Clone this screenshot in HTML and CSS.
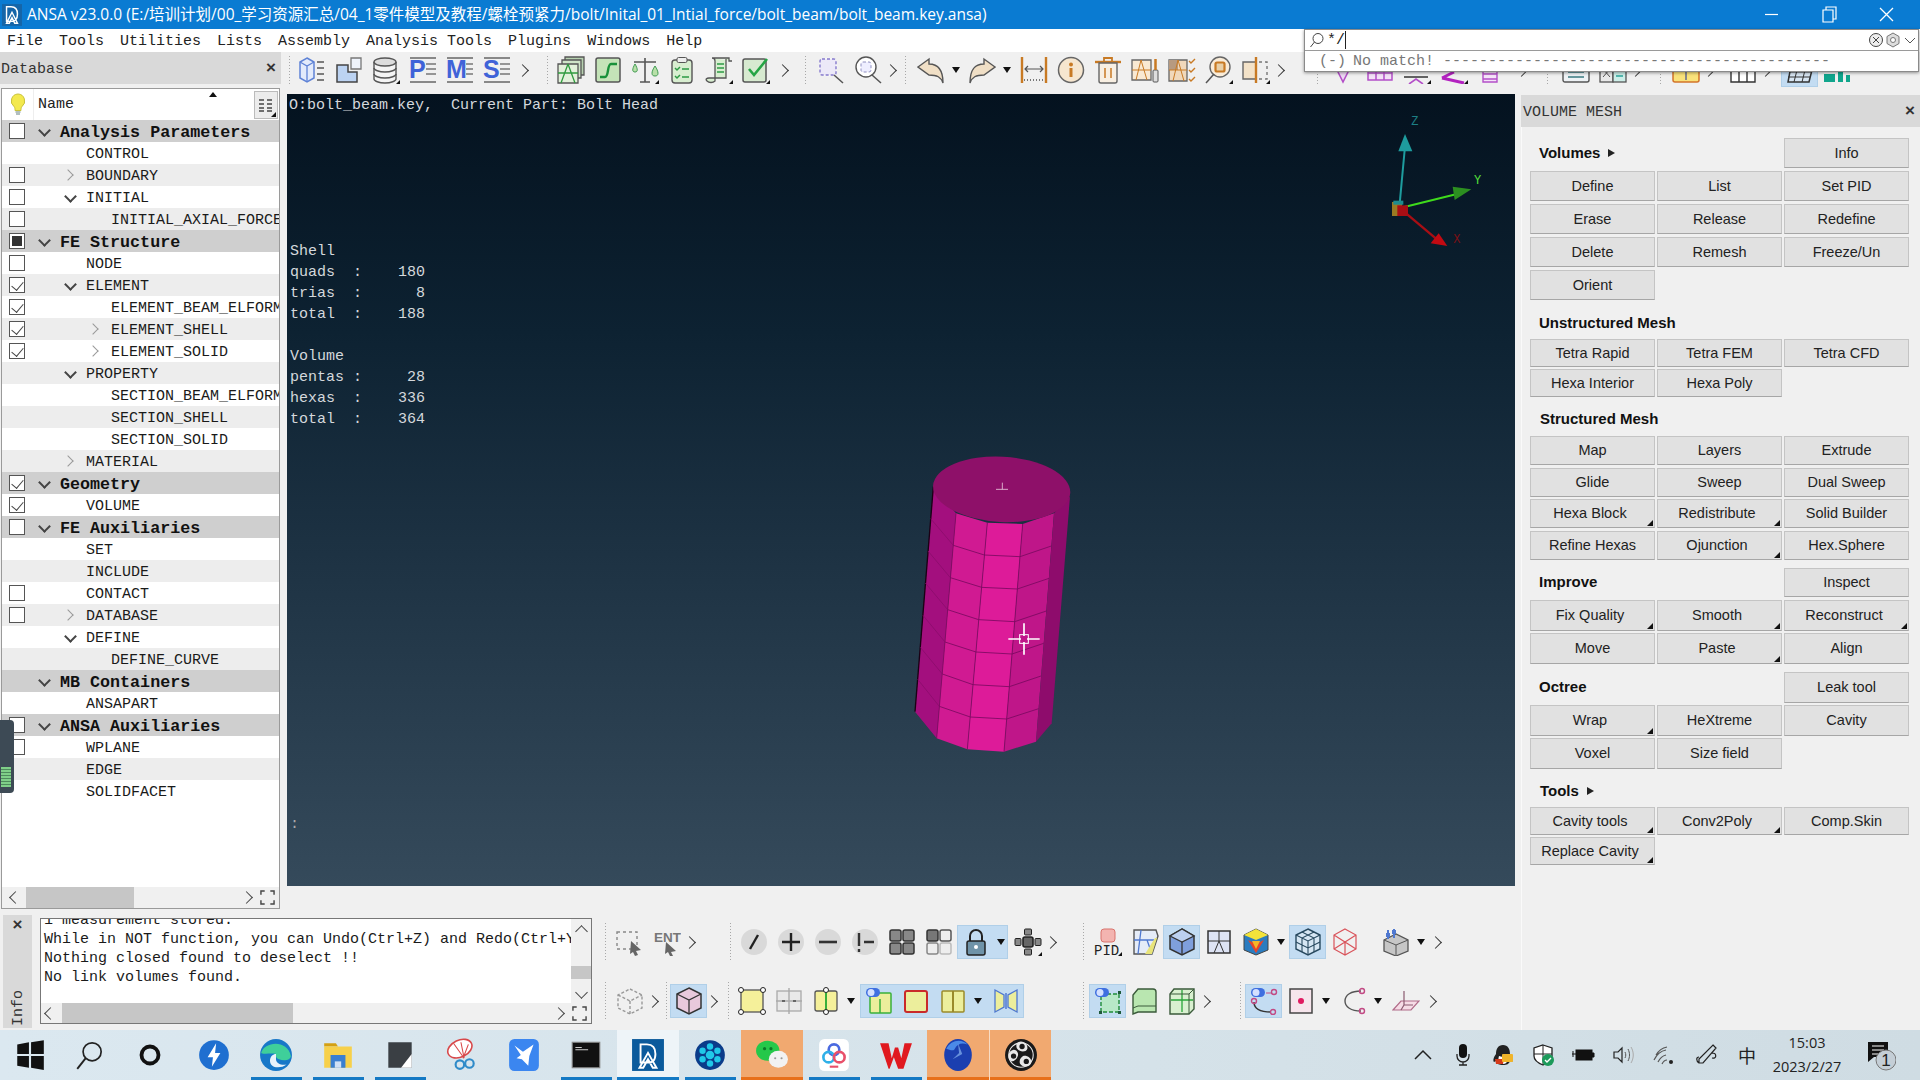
FILE: index.html
```html
<!DOCTYPE html>
<html lang="en">
<head>
<meta charset="utf-8">
<title>ANSA</title>
<link rel="stylesheet" href="styles.css">
</head>
<body>
<header class="titlebar">
  <svg class="applogo" viewBox="0 0 22 24"><rect width="22" height="24" fill="#1565a8"/><path d="M5 3h5q7 0 7 8t-7 8H5zM11 9l-6 12h3l3-6 3 6h3z" fill="none" stroke="#fff" stroke-width="1.6"/></svg>
  <span class="titletext">ANSA v23.0.0 (E:/培训计划/00_学习资源汇总/04_1零件模型及教程/螺栓预紧力/bolt/Inital_01_Intial_force/bolt_beam/bolt_beam.key.ansa)</span>
  <div class="winctl">
    <svg viewBox="0 0 58 29"><path d="M23 14.500h13" stroke="#fff" stroke-width="1.200" fill="none"/></svg>
    <svg viewBox="0 0 58 29"><path d="M23 10h10v12H23zM26 10V7h10v12h-3" stroke="#fff" stroke-width="1.200" fill="none"/></svg>
    <svg viewBox="0 0 58 29"><path d="M22 8l13 13M35 8L22 21" stroke="#fff" stroke-width="1.300" fill="none"/></svg>
  </div>
</header>
<nav class="menubar"><span>File</span><span>Tools</span><span>Utilities</span><span>Lists</span><span>Assembly</span><span>Analysis Tools</span><span>Plugins</span><span>Windows</span><span>Help</span></nav>

<main class="work">
  <section class="dbpanel">
    <div class="dbhead"><span class="dbt">Database</span><span class="x">×</span></div>
    <div class="tree">
      <div class="treehead">
        <svg class="lamp" viewBox="0 0 16 24"><path d="M8 1a7 7 0 0 0-4 12.500c1 1 1 3 1 4h6c0-1 0-3 1-4A7 7 0 0 0 8 1z" fill="#f3e94e" stroke="#c9c23a"/><path d="M5.500 19h5M6 21h4" stroke="#9aa" stroke-width="1.500"/></svg>
        <span class="namecol">Name</span>
        <span class="sortup"></span>
        <span class="colbtn"><svg viewBox="0 0 20 18"><path d="M3 4h5M3 8h5M3 12h5M11 4h5M11 8h5M11 12h5M3 15h5M11 15h5" stroke="#444" stroke-width="1.400" fill="none"/></svg></span>
      </div>
      <div class="rows">
        <div class="row hd"><span class="cbs"><i class="cb"></i></span><i class="chv down"></i><span class="lbl">Analysis Parameters</span></div>
        <div class="row"><span class="cbs"></span><i class="chv l1"></i><span class="lbl">CONTROL</span></div>
        <div class="row alt"><span class="cbs"><i class="cb"></i></span><i class="chv right l1"></i><span class="lbl">BOUNDARY</span></div>
        <div class="row"><span class="cbs"><i class="cb"></i></span><i class="chv down l1"></i><span class="lbl">INITIAL</span></div>
        <div class="row alt"><span class="cbs"><i class="cb"></i></span><i class="chv l2"></i><span class="lbl">INITIAL_AXIAL_FORCE</span></div>
        <div class="row hd"><span class="cbs"><i class="cb fill"></i></span><i class="chv down"></i><span class="lbl">FE Structure</span></div>
        <div class="row"><span class="cbs"><i class="cb"></i></span><i class="chv l1"></i><span class="lbl">NODE</span></div>
        <div class="row alt"><span class="cbs"><i class="cb on"></i></span><i class="chv down l1"></i><span class="lbl">ELEMENT</span></div>
        <div class="row"><span class="cbs"><i class="cb on"></i></span><i class="chv l2"></i><span class="lbl">ELEMENT_BEAM_ELFORM</span></div>
        <div class="row alt"><span class="cbs"><i class="cb on"></i></span><i class="chv right l2"></i><span class="lbl">ELEMENT_SHELL</span></div>
        <div class="row"><span class="cbs"><i class="cb on"></i></span><i class="chv right l2"></i><span class="lbl">ELEMENT_SOLID</span></div>
        <div class="row alt"><span class="cbs"></span><i class="chv down l1"></i><span class="lbl">PROPERTY</span></div>
        <div class="row"><span class="cbs"></span><i class="chv l2"></i><span class="lbl">SECTION_BEAM_ELFORM</span></div>
        <div class="row alt"><span class="cbs"></span><i class="chv l2"></i><span class="lbl">SECTION_SHELL</span></div>
        <div class="row"><span class="cbs"></span><i class="chv l2"></i><span class="lbl">SECTION_SOLID</span></div>
        <div class="row alt"><span class="cbs"></span><i class="chv right l1"></i><span class="lbl">MATERIAL</span></div>
        <div class="row hd"><span class="cbs"><i class="cb on"></i></span><i class="chv down"></i><span class="lbl">Geometry</span></div>
        <div class="row"><span class="cbs"><i class="cb on"></i></span><i class="chv l1"></i><span class="lbl">VOLUME</span></div>
        <div class="row hd"><span class="cbs"><i class="cb"></i></span><i class="chv down"></i><span class="lbl">FE Auxiliaries</span></div>
        <div class="row"><span class="cbs"></span><i class="chv l1"></i><span class="lbl">SET</span></div>
        <div class="row alt"><span class="cbs"></span><i class="chv l1"></i><span class="lbl">INCLUDE</span></div>
        <div class="row"><span class="cbs"><i class="cb"></i></span><i class="chv l1"></i><span class="lbl">CONTACT</span></div>
        <div class="row alt"><span class="cbs"><i class="cb"></i></span><i class="chv right l1"></i><span class="lbl">DATABASE</span></div>
        <div class="row"><span class="cbs"></span><i class="chv down l1"></i><span class="lbl">DEFINE</span></div>
        <div class="row alt"><span class="cbs"></span><i class="chv l2"></i><span class="lbl">DEFINE_CURVE</span></div>
        <div class="row hd"><span class="cbs"></span><i class="chv down"></i><span class="lbl">MB Containers</span></div>
        <div class="row"><span class="cbs"></span><i class="chv l1"></i><span class="lbl">ANSAPART</span></div>
        <div class="row hd"><span class="cbs"><i class="cb"></i></span><i class="chv down"></i><span class="lbl">ANSA Auxiliaries</span></div>
        <div class="row"><span class="cbs"><i class="cb"></i></span><i class="chv l1"></i><span class="lbl">WPLANE</span></div>
        <div class="row alt"><span class="cbs"></span><i class="chv l1"></i><span class="lbl">EDGE</span></div>
        <div class="row"><span class="cbs"></span><i class="chv l1"></i><span class="lbl">SOLIDFACET</span></div>
      </div>
      <div class="hbar">
        <i class="arr left"></i><span class="track"><b class="thumb t1"></b></span><i class="arr rightarr"></i>
        <svg class="corners" viewBox="0 0 16 16"><path d="M1 5V1h4M11 1h4v4M1 11v4h4M15 11v4h-4" fill="none" stroke="#444" stroke-width="1.500"/></svg>
      </div>
    </div>
  </section>

  <section class="toolbar top">
    <i class="sep s1"></i><i class="sp w2"></i>
    <span class="i"><svg class="ic" viewBox="0 0 28 28"><path d="M9 2l7 4v16l-7 4-7-4V6z" fill="#e3ebfb" stroke="#5f83d6" stroke-width="1.500"/><path d="M2 6l7 4 7-4M9 10v16" fill="none" stroke="#5f83d6" stroke-width="1.300"/><path d="M19 6h7M19 12h7M19 18h7M19 24h7" stroke="#555" stroke-width="1.500"/></svg></span>
    <span class="i"><svg class="ic" viewBox="0 0 28 28"><path d="M2 9h11v7h9v10H2z" fill="#bcd3f2" stroke="#444" stroke-width="1.500"/><path d="M16 2h10v11H16z" fill="#eef3fb" stroke="#777" stroke-width="1.300"/></svg></span>
    <span class="i"><svg class="ic" viewBox="0 0 28 28"><path d="M2 6v17c0 2 5 4 11 4s11-2 11-4V6" fill="#f4f4f4" stroke="#555" stroke-width="1.400"/><ellipse cx="13" cy="6" rx="11" ry="4" fill="#ddd" stroke="#555" stroke-width="1.400"/><path d="M2 12c0 2 5 4 11 4s11-2 11-4M2 18c0 2 5 4 11 4s11-2 11-4" fill="none" stroke="#555" stroke-width="1.400"/><path class="tri" d="M24 28h4v-4z"/></svg></span>
    <span class="i"><svg class="ic" viewBox="0 0 28 28"><path d="M1 2h26M1 26h26" stroke="#666" stroke-width="1.500"/><text x="0" y="22" class="bigl">P</text><path d="M17 8h10M17 13h10M17 18h10" stroke="#777" stroke-width="1.300"/></svg></span>
    <span class="i"><svg class="ic" viewBox="0 0 28 28"><path d="M1 2h26M1 26h26" stroke="#666" stroke-width="1.500"/><text x="0" y="22" class="bigl">M</text><path d="M20 8h7M20 13h7M20 18h7" stroke="#777" stroke-width="1.300"/></svg></span>
    <span class="i"><svg class="ic" viewBox="0 0 28 28"><path d="M1 2h26M1 26h26" stroke="#666" stroke-width="1.500"/><text x="0" y="22" class="bigl">S</text><path d="M17 8h10M17 13h10M17 18h10" stroke="#777" stroke-width="1.300"/></svg></span>
    <i class="sp w3"></i><i class="ch"></i><i class="sp w16"></i>
    <i class="sep"></i><i class="sp w3"></i>
    <span class="i"><svg class="ic" viewBox="0 0 28 28"><path d="M8 1h19v18H8z" fill="#b7d1b0" stroke="#555" stroke-width="1.300"/><path d="M5 4h19v18H5z" fill="#cfe4c8" stroke="#555" stroke-width="1.300"/><path d="M1 8h20v19H1z" fill="#e2f1da" stroke="#555" stroke-width="1.300"/><path d="M1 17h20M11 8L4 27M11 8l7 19" stroke="#2f9a3e" stroke-width="1.300" fill="none"/></svg></span>
    <span class="i"><svg class="ic" viewBox="0 0 28 28"><rect x="2" y="2" width="24" height="24" rx="2" fill="#c4e3b8" stroke="#555" stroke-width="1.500"/><path d="M6 21h5c4 0 2-13 6-13h6" fill="none" stroke="#18913a" stroke-width="2.400"/></svg></span>
    <span class="i"><svg class="ic" viewBox="0 0 28 28"><path d="M14 2v24M9 26h10M3 6h22" stroke="#555" stroke-width="1.600" fill="none"/><path d="M4 8c-3 5-3 8 0 8s3-3 0-8zM24 10c-4 6-4 10 0 10s4-4 0-10z" fill="#b8e0a8" stroke="#3f9a50"/><path class="tri" d="M24 28h4v-4z"/></svg></span>
    <span class="i"><svg class="ic" viewBox="0 0 28 28"><rect x="4" y="4" width="20" height="23" rx="3" fill="#d8eed0" stroke="#555" stroke-width="1.400"/><rect x="9" y="1.500" width="10" height="5" rx="1.500" fill="#eee" stroke="#555"/><path d="M7 12l2 2 3-3M7 20l2 2 3-3M14 13h7M14 21h7" stroke="#2d9a44" stroke-width="1.500" fill="none"/></svg></span>
    <span class="i"><svg class="ic" viewBox="0 0 28 28"><path d="M7 2h17v3h3M7 2c3 0 3 3 3 3v20c-2 2-6 2-8 0s0-3 2-3h17v-19" fill="#d8eed0" stroke="#555" stroke-width="1.300"/><path d="M12 8h7M12 12h7M12 16h7" stroke="#2d9a44" stroke-width="1.400"/><path class="tri" d="M24 28h4v-4z"/></svg></span>
    <span class="i"><svg class="ic" viewBox="0 0 28 28"><rect x="1" y="3" width="23" height="23" rx="2" fill="#d7ead0" stroke="#555" stroke-width="1.500"/><path d="M7 13l5 6L25 3" fill="none" stroke="#25a545" stroke-width="2.600"/><path class="tri" d="M24 28h4v-4z"/></svg></span>
    <i class="sp w4"></i><i class="ch"></i><i class="sp w14"></i>
    <i class="sep"></i><i class="sp w5"></i>
    <span class="i"><svg class="ic" viewBox="0 0 28 28"><circle cx="11" cy="11" r="9.500" fill="#f8f8f8"/><rect x="3" y="3" width="16" height="16" rx="2" fill="#ece9f8" stroke="#8579cc" stroke-width="1.400" stroke-dasharray="3 2"/><path d="M17 19l9 8" stroke="#555" stroke-width="1.500"/></svg></span>
    <span class="i"><svg class="ic" viewBox="0 0 28 28"><circle cx="12" cy="11" r="10" fill="#fff" stroke="#555" stroke-width="1.400"/><rect x="7" y="6" width="10" height="10" rx="2" fill="#eef" stroke="#8f8fc0" stroke-dasharray="3 2"/><path d="M18 19l9 8" stroke="#555" stroke-width="1.500"/></svg></span>
    <i class="ch"></i><i class="sp w6"></i>
    <i class="sep"></i><i class="sp w5"></i>
    <span class="i"><svg class="ic" viewBox="0 0 28 28"><path d="M1 11l11-8v5c8 0 14 4 14 19-2-6-6-8-14-8v0z" fill="#f0dfc6" stroke="#555" stroke-width="1.400"/></svg></span>
    <i class="dd"></i>
    <span class="i"><svg class="ic" viewBox="0 0 28 28"><path d="M27 11L16 3v5C8 8 2 12 2 27c2-6 6-8 14-8z" fill="#f0dfc6" stroke="#555" stroke-width="1.400"/></svg></span>
    <i class="dd"></i><i class="sp w1"></i>
    <span class="i"><svg class="ic" viewBox="0 0 28 28"><path d="M2 1v26M26 1v26" stroke="#c87a24" stroke-width="2.400"/><path d="M5 13h18M8 10l-3 3 3 3M20 10l3 3-3 3" stroke="#555" fill="none" stroke-width="1.200"/><path d="M4 24h20" stroke="#777" stroke-width="2" stroke-dasharray="1 2"/></svg></span>
    <span class="i"><svg class="ic" viewBox="0 0 28 28"><circle cx="14" cy="14" r="12.500" fill="#f6e6cf" stroke="#666" stroke-width="1.500"/><circle cx="14" cy="8.500" r="2" fill="#c87a24"/><path d="M14 12v9" stroke="#c87a24" stroke-width="3"/></svg></span>
    <span class="i"><svg class="ic" viewBox="0 0 28 28"><path d="M1 6h26" stroke="#c87a24" stroke-width="2.400"/><path d="M10 6V2h8v4" fill="none" stroke="#c87a24" stroke-width="1.800"/><path d="M5 7h18v18a2 2 0 0 1-2 2H7a2 2 0 0 1-2-2z" fill="#f8efe2" stroke="#666" stroke-width="1.400"/><path d="M11 12v10M17 12v10" stroke="#c87a24" stroke-width="1.500"/></svg></span>
    <span class="i"><svg class="ic" viewBox="0 0 28 28"><path d="M1 4h19v20H1z" fill="#f9e9d2" stroke="#666" stroke-width="1.300"/><path d="M1 14h19M10 4L5 24M10 4l6 20" stroke="#c87a24" fill="none"/><rect x="22" y="14" width="5" height="12" rx="1" fill="#ddd" stroke="#555"/><path d="M24.500 3v11" stroke="#c87a24" stroke-width="2.500"/></svg></span>
    <span class="i"><svg class="ic" viewBox="0 0 28 28"><path d="M1 4h18v21H1z" fill="#f0d8bb" stroke="#666" stroke-width="1.300"/><path d="M1 4h9v10H1z" fill="#b79a80"/><path d="M1 14h18M10 4L5 25M10 4l6 21" stroke="#c87a24" fill="none"/><path d="M21 5l2 2 4-4M21 14l2 2 4-4M21 23l2 2 4-4" stroke="#c87a24" stroke-width="1.400" fill="none"/></svg></span>
    <span class="i"><svg class="ic" viewBox="0 0 28 28"><circle cx="15" cy="11" r="10" fill="#f9ecd9" stroke="#666" stroke-width="1.400"/><rect x="10.500" y="6.500" width="9" height="9" rx="1.500" fill="#e8d0a8" stroke="#c87a24" stroke-width="2.200"/><path d="M9 18L1 27" stroke="#555" stroke-width="1.500"/><path class="tri" d="M24 28h4v-4z"/></svg></span>
    <span class="i"><svg class="ic" viewBox="0 0 28 28"><path d="M1 6h13v17H1z" fill="#f3e2c8" stroke="#666" stroke-width="1.400"/><path d="M14 1v26" stroke="#c87a24" stroke-width="2.400"/><path d="M17 6h8v17h-8" fill="none" stroke="#777" stroke-width="1.400" stroke-dasharray="3 3"/><path class="tri" d="M24 28h4v-4z"/></svg></span>
    <i class="ch"></i><i class="sp w30"></i>
    <i class="sep"></i><i class="sp w5"></i>
    <span class="i"><svg class="ic" viewBox="0 0 28 28"><path d="M6 10l8 16 8-16" fill="#ecd8f2" stroke="#b34fc8" stroke-width="1.600"/><circle cx="14" cy="11" r="3" fill="none" stroke="#b34fc8"/></svg></span>
    <span class="i"><svg class="ic" viewBox="0 0 28 28"><path d="M2 10h24v14H2zM2 17h24M10 10v14M18 10v14" fill="#f3e0f6" stroke="#b34fc8" stroke-width="1.500"/></svg></span>
    <span class="i"><svg class="ic" viewBox="0 0 28 28"><path d="M1 21h24" stroke="#333" stroke-width="1.500"/><path d="M6 28l7-5 7 5" fill="none" stroke="#b34fc8" stroke-width="1.600"/><path class="tri" d="M24 28h4v-4z"/></svg></span>
    <span class="i"><svg class="ic" viewBox="0 0 28 28"><path d="M2 22l12-6M2 22l22 5" stroke="#b322c0" stroke-width="3" fill="none"/><path class="tri" d="M24 28h4v-4z"/></svg></span>
    <span class="i"><svg class="ic" viewBox="0 0 28 28"><path d="M6 12v14h14V12M6 18h14M6 23h14" fill="#f5e4f8" stroke="#b34fc8" stroke-width="1.400"/></svg></span>
    <i class="sp w8"></i><i class="ch"></i><i class="sp w17"></i>
    <i class="sep"></i><i class="sp w8"></i>
    <span class="i"><svg class="ic" viewBox="0 0 28 28"><rect x="1" y="8" width="26" height="18" rx="2" fill="#eef2f5" stroke="#555" stroke-width="1.400"/><path d="M6 16h16M6 21h16" stroke="#3a7a80" stroke-width="1.300"/></svg></span>
    <span class="i"><svg class="ic" viewBox="0 0 28 28"><rect x="1" y="8" width="13" height="18" fill="#e9e9e9" stroke="#555" stroke-width="1.300"/><rect x="14" y="8" width="13" height="18" fill="#cdeee8" stroke="#555" stroke-width="1.300"/><path d="M4 13l7 8M11 13l-7 8" stroke="#555"/><path d="M17 15h7M17 20h7" stroke="#2ba59a" stroke-width="1.400"/></svg></span>
    <i class="ch"></i><i class="sp w16"></i>
    <i class="sep"></i><i class="sp w5"></i>
    <span class="i"><svg class="ic" viewBox="0 0 28 28"><rect x="1" y="6" width="26" height="20" rx="2" fill="#f9e27a" stroke="#d2742a" stroke-width="1.500"/><path d="M14 16v8" stroke="#888" stroke-width="2"/></svg></span>
    <i class="ch"></i><i class="sp w8"></i>
    <span class="i"><svg class="ic" viewBox="0 0 28 28"><path d="M2 10h24v16H2zM2 15h24M10 15v11M18 15v11" fill="#fff" stroke="#333" stroke-width="1.400"/></svg></span>
    <i class="ch"></i><i class="sp w8"></i>
    <span class="i act"><svg class="ic" viewBox="0 0 28 28"><path d="M5 10h22l-4 16H2z" fill="#d8e6f3" stroke="#333" stroke-width="1.500"/><path d="M3 16h22M2 21h22M12 10l-4 16M20 10l-4 16" stroke="#333" fill="none"/></svg></span>
    <span class="i"><svg class="ic" viewBox="0 0 28 28"><path d="M1 8h11v8H1zM1 18h11v8H1zM15 8h5v18h-5zM23 8h4v8h-4zM23 19h4v7h-4z" fill="#11a58c"/></svg></span>
  </section>

  <section class="viewport">
    <pre class="vtop">O:bolt_beam.key,  Current Part: Bolt Head</pre>
    <pre class="stats">Shell
quads  :    180
trias  :      8
total  :    188

Volume
pentas :     28
hexas  :    336
total  :    364</pre>
    <div class="vdots">:</div>
    <svg class="axes" viewBox="0 0 390 510">
      <path d="M118 322L134 150" stroke="#1e9c9e" stroke-width="6"/><path d="M135 102l22 52h-42z" fill="#1e9c9e"/>
      <path d="M130 322L300 280" stroke="#3fdb1c" stroke-width="6"/><path d="M334 268l-50 32-6-40z" fill="#2c8f20"/>
      <path d="M132 335L228 416" stroke="#a80e14" stroke-width="7"/><path d="M262 438l-50-8 24-30z" fill="#c30a12"/>
      <rect x="96" y="306" width="30" height="42" fill="#9a7a22"/><rect x="112" y="316" width="32" height="32" fill="#a80e14"/><rect x="100" y="302" width="30" height="12" fill="#1e8c8e"/>
      <text x="154" y="76" class="axl z">Z</text><text x="342" y="252" class="axl y">Y</text><text x="280" y="430" class="axl xx">X</text>
    </svg>
    <svg class="cyl" viewBox="0 0 660 1020">
      <path d="M160 170L105 845 170 925 178 829 187 732 195 636 203 539 211 443 220 346 228 250z" fill="#a30f7e"/>
      <path d="M228 250L170 925 262 958 322 278z" fill="#d01a92"/>
      <path d="M322 278L262 958 372 965 428 282z" fill="#dd1b99"/>
      <path d="M428 282L372 965 468 935 522 250z" fill="#bf1689"/>
      <path d="M522 250L468 935 515 880 570 200z" fill="#8e0c6c"/>
      <path d="M160 170L105 845" stroke="#1a0014" stroke-width="4"/>
      <path d="M228 250L170 925M322 278L262 958M428 282L372 965" stroke="#7d0a62" stroke-width="2.500"/>
      <g fill="none" stroke-width="2.500">
        <path stroke="#8c0c6c" d="M152 266L220 346M144 363L211 443M136 459L203 539M129 556L195 636M121 652L187 732M113 748L178 829"/>
        <path stroke="#7a0a60" d="M220 346L313 375 420 380 514 348M211 443L305 472 412 477 507 445M203 539L296 569 404 575 499 543M195 636L288 666 396 672 491 640M187 732L279 764 388 770 483 738M178 829L271 861 380 867 476 836"/>
      </g>
      <ellipse cx="365" cy="178" rx="206" ry="98" transform="rotate(3 365 178)" fill="#8e1069"/>
      <path d="M348 178h36M367 158v20" stroke="#e8c8dc" stroke-width="2.500"/>
      <path d="M432 580v38M432 636v38M385 627h38M441 627h38" stroke="#fff" stroke-width="5"/>
      <rect x="419" y="614" width="26" height="26" fill="none" stroke="#fff" stroke-width="3"/>
    </svg>
  </section>

  <aside class="rpanel">
    <div class="rhead"><span class="rt">VOLUME MESH</span><span class="x">×</span></div>
    <div class="rbody">
      <div class="sec s-vol">
        <div class="ttl span2">Volumes <i class="play"></i></div><button class="b">Info</button>
        <button class="b">Define</button><button class="b">List</button><button class="b">Set PID</button>
        <button class="b">Erase</button><button class="b">Release</button><button class="b">Redefine</button>
        <button class="b">Delete</button><button class="b">Remesh</button><button class="b">Freeze/Un</button>
        <button class="b">Orient</button>
      </div>
      <div class="head h-un">Unstructured Mesh</div>
      <div class="sec s-un">
        <button class="b">Tetra Rapid</button><button class="b">Tetra FEM</button><button class="b">Tetra CFD</button>
        <button class="b">Hexa Interior</button><button class="b">Hexa Poly</button>
      </div>
      <div class="head h-st">Structured Mesh</div>
      <div class="sec s-st">
        <button class="b">Map</button><button class="b">Layers</button><button class="b">Extrude</button>
        <button class="b">Glide</button><button class="b">Sweep</button><button class="b">Dual Sweep</button>
        <button class="b m">Hexa Block</button><button class="b m">Redistribute</button><button class="b">Solid Builder</button>
        <button class="b">Refine Hexas</button><button class="b m">Ojunction</button><button class="b">Hex.Sphere</button>
      </div>
      <div class="sec s-im">
        <div class="ttl span2">Improve</div><button class="b">Inspect</button>
        <button class="b m">Fix Quality</button><button class="b m">Smooth</button><button class="b m">Reconstruct</button>
        <button class="b">Move</button><button class="b m">Paste</button><button class="b">Align</button>
      </div>
      <div class="sec s-oc">
        <div class="ttl span2">Octree</div><button class="b">Leak tool</button>
        <button class="b m">Wrap</button><button class="b">HeXtreme</button><button class="b">Cavity</button>
        <button class="b">Voxel</button><button class="b">Size field</button>
      </div>
      <div class="head h-to">Tools <i class="play"></i></div>
      <div class="sec s-to">
        <button class="b m">Cavity tools</button><button class="b m">Conv2Poly</button><button class="b">Comp.Skin</button>
        <button class="b m">Replace Cavity</button>
      </div>
    </div>
  </aside>

  <section class="info">
    <div class="infotab"><span class="x">×</span><span class="vert">Info</span></div>
    <div class="infobox">
      <div class="inforow">
        <pre class="log">1 measurement stored.
While in NOT function, you can Undo(Ctrl+Z) and Redo(Ctrl+Y)
Nothing closed found to deselect !!
No link volumes found.</pre>
        <div class="vbar"><i class="arr upa"></i><b class="vthumb"></b><i class="arr dna"></i></div>
      </div>
      <div class="hbar h2">
        <i class="arr left"></i><span class="track"><b class="thumb t2"></b></span><i class="arr rightarr"></i>
        <svg class="corners" viewBox="0 0 16 16"><path d="M1 5V1h4M11 1h4v4M1 11v4h4M15 11v4h-4" fill="none" stroke="#444" stroke-width="1.500"/></svg>
      </div>
    </div>
  </section>

  <section class="bottools">
    <div class="toolbar">
      <i class="sp w12"></i><i class="sep"></i><i class="sp w4"></i>
      <span class="i"><svg class="ic" viewBox="0 0 28 28"><rect x="1" y="4" width="20" height="17" fill="none" stroke="#888" stroke-width="1.400" stroke-dasharray="3 3"/><path d="M15 13l10 9-5 1 2 4-3 1-2-4-3 2z" fill="#666"/></svg></span>
      <span class="i"><svg class="ic" viewBox="0 0 28 28"><text x="1" y="14" class="ent">ENT</text><path d="M13 14l10 9-5 1 2 4-3 0-2-4-3 2z" fill="#666"/></svg></span>
      <i class="ch"></i><i class="sp w32"></i><i class="sep"></i><i class="sp w3"></i>
      <span class="i"><svg class="ic" viewBox="0 0 28 28"><circle cx="14" cy="14" r="13" fill="#d9d9d9"/><path d="M10 21l8-14" stroke="#222" stroke-width="2.400"/></svg></span>
      <span class="i"><svg class="ic" viewBox="0 0 28 28"><circle cx="14" cy="14" r="13" fill="#d9d9d9"/><path d="M14 5v18M5 14h18" stroke="#222" stroke-width="2.400"/></svg></span>
      <span class="i"><svg class="ic" viewBox="0 0 28 28"><circle cx="14" cy="14" r="13" fill="#d9d9d9"/><path d="M5 14h18" stroke="#333" stroke-width="2.600"/></svg></span>
      <span class="i"><svg class="ic" viewBox="0 0 28 28"><circle cx="14" cy="14" r="13" fill="#d9d9d9"/><path d="M8 5v13M8 21v3M13 14h10" stroke="#333" stroke-width="2.400"/></svg></span>
      <span class="i"><svg class="ic" viewBox="0 0 28 28"><rect x="2" y="2" width="11" height="11" rx="2" fill="#888" stroke="#333" stroke-width="1.500"/><rect x="15" y="2" width="11" height="11" rx="2" fill="#888" stroke="#333" stroke-width="1.500"/><rect x="2" y="15" width="11" height="11" rx="2" fill="#888" stroke="#333" stroke-width="1.500"/><rect x="15" y="15" width="11" height="11" rx="2" fill="#888" stroke="#333" stroke-width="1.500"/></svg></span>
      <span class="i"><svg class="ic" viewBox="0 0 28 28"><rect x="2" y="2" width="11" height="11" rx="2" fill="#777" stroke="#333" stroke-width="1.500"/><rect x="15" y="2" width="11" height="11" rx="2" fill="#eee" stroke="#555" stroke-width="1.500"/><rect x="2" y="15" width="11" height="11" rx="2" fill="#eee" stroke="#888" stroke-width="1.500"/><rect x="15" y="15" width="11" height="11" rx="2" fill="#eee" stroke="#bbb" stroke-width="1.500"/></svg></span>
      <span class="actgroup"><span class="i"><svg class="ic" viewBox="0 0 28 28"><path d="M8 13V8a6 6 0 0 1 12 0v5" fill="none" stroke="#222" stroke-width="2"/><rect x="5" y="13" width="18" height="14" rx="2" fill="#6f93a8" stroke="#222" stroke-width="1.500"/><circle cx="14" cy="19" r="2" fill="#fff"/></svg></span><i class="dd"></i></span>
      <i class="sp w1"></i>
      <span class="i"><svg class="ic" viewBox="0 0 28 28"><rect x="9" y="9" width="10" height="10" rx="2" fill="#666" stroke="#222" stroke-width="1.600"/><rect x="10.500" y="1" width="7" height="6" rx="1" fill="#888" stroke="#222"/><rect x="10.500" y="21" width="7" height="6" rx="1" fill="#888" stroke="#222"/><rect x="1" y="10.500" width="6" height="7" rx="1" fill="#888" stroke="#222"/><rect x="21" y="10.500" width="6" height="7" rx="1" fill="#888" stroke="#222"/><path class="tri" d="M24 28h4v-4z"/></svg></span>
      <i class="ch"></i><i class="sp w24"></i><i class="sep"></i><i class="sp w4"></i>
      <span class="i"><svg class="ic" viewBox="0 0 28 28"><rect x="7" y="1" width="14" height="13" rx="3" fill="#f3b4b0" stroke="#d9736c"/><text x="0" y="27" class="pid">PID</text><path class="tri" d="M24 28h4v-4z"/></svg></span>
      <span class="i"><svg class="ic" viewBox="0 0 28 28"><path d="M3 2h22l2 6-6 18H3z" fill="#e5ecf8" stroke="#555" stroke-width="1.400"/><path d="M3 12h20M10 2L7 26M16 12l5 14" stroke="#4f78d0" fill="none" stroke-width="1.300"/><path d="M14 26l10-16 2 0-5 16z" fill="#e8e47a"/></svg></span>
      <span class="i act"><svg class="ic" viewBox="0 0 28 28"><path d="M14 1l12 7v13l-12 6-12-6V8z" fill="#7f9fdc" stroke="#333" stroke-width="1.500"/><path d="M2 8l12 6 12-6-12-7z" fill="#bcd0f0" stroke="#333" stroke-width="1.300"/><path d="M14 14v13" stroke="#333" stroke-width="1.300"/></svg></span>
      <span class="i"><svg class="ic" viewBox="0 0 28 28"><path d="M3 3h22v22H3z" fill="#dde3f4" stroke="#333" stroke-width="1.500"/><path d="M3 13h22M14 3v10M14 13l-5 12M14 13l5 12" stroke="#333" fill="none"/></svg></span>
      <span class="i"><svg class="ic" viewBox="0 0 28 28"><path d="M14 1l12 6v15l-12 5-12-5V7z" fill="#2a7cc0" stroke="#444"/><path d="M2 7l12 5 12-5-12-6z" fill="#f2e33a"/><path d="M6 12l8 13 8-13-8 4z" fill="#e8442a"/><path d="M10 13l4 8 4-8z" fill="#f3b62a"/></svg></span>
      <i class="dd"></i><i class="sp w1"></i>
      <span class="i act"><svg class="ic" viewBox="0 0 28 28"><path d="M14 1l12 6v14l-12 6-12-6V7z" fill="#d6e6f3" stroke="#28495f" stroke-width="1.400"/><path d="M2 7l12 6 12-6M14 13v14M8 4l12 6v14M20 4L8 10v14M2 14l12 6 12-6" fill="none" stroke="#28495f" stroke-width="1.100"/></svg></span>
      <span class="i"><svg class="ic" viewBox="0 0 28 28"><path d="M14 1l11 6v14l-11 6-11-6V7zM3 7l11 7 11-7M14 14v13M3 21l22-14M25 21L3 7" fill="none" stroke="#d9535a" stroke-width="1.200"/></svg></span>
      <i class="sp w14"></i>
      <span class="i"><svg class="ic" viewBox="0 0 28 28"><path d="M2 12l12-6 12 6v11l-12 5-12-5z" fill="#c6c6c6" stroke="#555" stroke-width="1.300"/><path d="M2 12l12 5 12-5M14 17v11" fill="none" stroke="#555"/><path d="M6 2v9M12 1v9" stroke="#4f78d0" stroke-width="2"/><rect x="4" y="5" width="4" height="4" fill="#4f78d0"/><rect x="10" y="2" width="4" height="4" fill="#4f78d0"/></svg></span>
      <i class="dd"></i><i class="sp w3"></i><i class="ch"></i>
    </div>
    <div class="toolbar">
      <i class="sp w12"></i><i class="sep"></i><i class="sp w4"></i>
      <span class="i"><svg class="ic" viewBox="0 0 28 28"><path d="M14 2l12 6v13l-12 6-12-6V8zM2 8l12 6 12-6M14 14v13" fill="none" stroke="#999" stroke-width="1.400" stroke-dasharray="3 2"/></svg></span>
      <i class="ch"></i><i class="sp w5"></i><i class="sep"></i><i class="sp w2"></i>
      <span class="i act"><svg class="ic" viewBox="0 0 28 28"><path d="M14 1l12 6v14l-12 6-12-6V7z" fill="#e8c9dc" stroke="#333" stroke-width="1.500"/><path d="M2 7l12 6 12-6M14 13v14" fill="none" stroke="#333" stroke-width="1.300"/></svg></span>
      <i class="ch"></i><i class="sp w8"></i><i class="sep"></i><i class="sp w3"></i>
      <span class="i"><svg class="ic" viewBox="0 0 28 28"><rect x="3" y="3" width="22" height="22" fill="#f5f09a" stroke="#555" stroke-width="1.300"/><g fill="#fff" stroke="#222"><circle cx="3" cy="3" r="2.500"/><circle cx="25" cy="3" r="2.500"/><circle cx="3" cy="25" r="2.500"/><circle cx="25" cy="25" r="2.500"/></g></svg></span>
      <span class="i"><svg class="ic" viewBox="0 0 28 28"><rect x="2" y="4" width="24" height="20" fill="#e9e9e9" stroke="#aaa" stroke-width="1.300"/><path d="M14 1v26M1 14h26" stroke="#aaa" stroke-width="1.400"/><path d="M7 14h3M18 14h3" stroke="#666" stroke-width="2"/></svg></span>
      <span class="i"><svg class="ic" viewBox="0 0 28 28"><rect x="3" y="4" width="22" height="20" rx="2" fill="#f5f09a" stroke="#555" stroke-width="1.300"/><path d="M14 4v20" stroke="#3ab03a" stroke-width="2"/><g fill="#fff" stroke="#222"><circle cx="14" cy="3" r="2.500"/><circle cx="14" cy="25" r="2.500"/></g></svg></span>
      <i class="dd"></i><i class="sp w2"></i>
      <span class="actgroup">
        <span class="i"><svg class="ic" viewBox="0 0 28 28"><rect x="5" y="6" width="21" height="20" rx="1" fill="#ecee9c" stroke="#3ab03a" stroke-width="1.500"/><path d="M15 12v14" stroke="#3ab03a" stroke-width="1.500"/><rect x="1" y="1" width="14" height="9" rx="4.500" fill="#3f6fe0"/><circle cx="6" cy="5.500" r="3.500" fill="#d4e0ff"/></svg></span>
        <span class="i"><svg class="ic" viewBox="0 0 28 28"><rect x="3" y="4" width="22" height="21" rx="2" fill="#ecee9c" stroke="#c92a2a" stroke-width="2"/></svg></span>
        <span class="i"><svg class="ic" viewBox="0 0 28 28"><rect x="3" y="4" width="22" height="21" rx="1" fill="#ecee9c" stroke="#9a8a2a" stroke-width="1.500"/><path d="M14 4v21" stroke="#9a8a2a" stroke-width="2"/></svg></span>
        <i class="dd"></i><i class="sp w2"></i>
        <span class="i"><svg class="ic" viewBox="0 0 28 28"><path d="M3 3l9 5v12l-9 5zM25 3l-9 5v12l9 5z" fill="#ecee9c" stroke="#4f78d0" stroke-width="1.300"/><path d="M14 6v16" stroke="#4f78d0" stroke-width="1.500"/></svg></span>
      </span>
      <i class="sp w58"></i><i class="sep"></i><i class="sp w4"></i>
      <span class="i act"><svg class="ic" viewBox="0 0 28 28"><rect x="7" y="7" width="18" height="18" fill="#b8e8c8" stroke="#1f8a3a" stroke-width="1.400" stroke-dasharray="4 2"/><rect x="1" y="1" width="14" height="9" rx="4.500" fill="#3f6fe0"/><circle cx="6" cy="5.500" r="3.500" fill="#d4e0ff"/><path d="M24 4h3v3h-3zM5 24h3v3H5zM24 24h3v3h-3z" fill="#1f5a3a"/></svg></span>
      <span class="i"><svg class="ic" viewBox="0 0 28 28"><path d="M7 2h15a3 3 0 0 1 3 3v20H7L2 27V8z" fill="#b9e6b0" stroke="#3a5a3a" stroke-width="1.400"/><path d="M2 21l5-2h18" fill="none" stroke="#3a5a3a"/></svg></span>
      <span class="i"><svg class="ic" viewBox="0 0 28 28"><path d="M6 2h20v20l-5 5H2V7z" fill="#d9f0d0" stroke="#3a5a3a" stroke-width="1.400"/><path d="M14 3v22M3 13h22" stroke="#2aa53a" stroke-width="1.300"/><path d="M2 7h19v20M21 7l5-5" fill="none" stroke="#3a5a3a"/></svg></span>
      <i class="ch"></i><i class="sp w27"></i><i class="sep"></i><i class="sp w3"></i>
      <span class="i act"><svg class="ic" viewBox="0 0 28 28"><rect x="1" y="1" width="14" height="9" rx="4.500" fill="#3f6fe0"/><circle cx="6" cy="5.500" r="3.500" fill="#d4e0ff"/><path d="M4 15c0 8 8 10 17 10" fill="none" stroke="#333" stroke-width="1.400"/><g fill="none" stroke="#c24a84" stroke-width="1.400"><circle cx="4" cy="14" r="2.500"/><circle cx="23" cy="25" r="2.500"/><circle cx="24" cy="5" r="2.500"/></g><path d="M16 6h6" stroke="#c24a84"/></svg></span>
      <span class="i"><svg class="ic" viewBox="0 0 28 28"><rect x="3" y="2" width="22" height="24" fill="#f6e5ec" stroke="#444" stroke-width="1.500"/><circle cx="14" cy="14" r="3" fill="#e01a60"/></svg></span>
      <i class="dd"></i><i class="sp w1"></i>
      <span class="i"><svg class="ic" viewBox="0 0 28 28"><path d="M22 4C12 4 6 8 6 14s6 10 16 10" fill="none" stroke="#555" stroke-width="1.400"/><circle cx="23" cy="4" r="2.500" fill="none" stroke="#c24a84" stroke-width="1.400"/><circle cx="23" cy="24" r="2.500" fill="none" stroke="#c24a84" stroke-width="1.400"/></svg></span>
      <i class="dd"></i><i class="sp w2"></i>
      <span class="i"><svg class="ic" viewBox="0 0 28 28"><path d="M1 23L9 14h18l-8 9z" fill="#f6dce6" stroke="#b06a88" stroke-width="1.200"/><path d="M12 4v14h9M12 18l-3 5" fill="none" stroke="#8a5a70" stroke-width="1.200"/></svg></span>
      <i class="sp w2"></i><i class="ch"></i>
    </div>
  </section>
</main>

<footer class="taskbar">
  <div class="tk3">
    <span class="tk"><svg class="tic" viewBox="0 0 32 32"><path d="M4 6l11-2v11H4zM17 4l12-2v13H17zM4 17h11v11L4 26zM17 17h12v13l-12-2z" fill="#111"/></svg></span>
    <span class="tk"><svg class="tic" viewBox="0 0 32 32"><circle cx="18" cy="13" r="8.500" fill="none" stroke="#222" stroke-width="1.600"/><path d="M12 19L4 29" stroke="#222" stroke-width="1.800"/></svg></span>
    <span class="tk"><svg class="tic" viewBox="0 0 32 32"><circle cx="16" cy="16" r="8" fill="none" stroke="#111" stroke-width="3.600"/></svg></span>
  </div>
  <i class="tkgap"></i>
  <span class="tk"><svg class="tic" viewBox="0 0 32 32"><circle cx="16" cy="16" r="14" fill="#1f6fd0"/><path d="M18 5l-8 13h5l-1 9 8-13h-5z" fill="#fff"/></svg></span>
  <span class="tk open"><svg class="tic" viewBox="0 0 32 32"><circle cx="16" cy="16" r="15" fill="#1878c8"/><path d="M2 14C5 3 27 1 30 17c0 4-7 5-11 3-4-1-3-5-3-5-6-1-10 1-14-1z" fill="#3fcf9a"/><path d="M16 15c-6 0-8 9-2 12 3 1 8 1 12-2-5 1-10-1-10-5 0-2 0-3 0-5z" fill="#fff" opacity=".9"/></svg></span>
  <span class="tk open"><svg class="tic" viewBox="0 0 32 32"><path d="M3 5h11l2 3H3z" fill="#d4a013"/><path d="M3 8h26v20H3z" fill="#f7d04a"/><path d="M9 16h14v12H9z" fill="#3a7fd0"/><path d="M13 22h6v6h-6z" fill="#cfe0f5"/></svg></span>
  <span class="tk open"><svg class="tic" viewBox="0 0 32 32"><path d="M5 4h22v24H5z" fill="#3a3f44"/><path d="M27 15v13H17z" fill="#fff"/></svg></span>
  <span class="tk"><svg class="tic" viewBox="0 0 32 32"><ellipse cx="14" cy="10" rx="12" ry="8" fill="#fff" stroke="#d8484a" stroke-width="1.500" transform="rotate(-25 14 10)"/><path d="M8 5l10 14M15 4l3 15M22 6l-5 13" stroke="#d8484a"/><circle cx="14" cy="25" r="4" fill="none" stroke="#2f8bc9" stroke-width="2"/><circle cx="23" cy="24" r="4" fill="none" stroke="#2f8bc9" stroke-width="2"/></svg></span>
  <span class="tk"><svg class="tic" viewBox="0 0 32 32"><rect x="2" y="1" width="28" height="30" rx="5" fill="#3b86f0"/><path d="M7 7l8 6 10-7-4 11-1 9-6-6-5-1 4-3z" fill="#fff"/></svg></span>
  <span class="tk open"><svg class="tic" viewBox="0 0 32 32"><rect x="3" y="4" width="26" height="24" fill="#111" stroke="#888"/><path d="M6 9h6M6 11h12" stroke="#ccc"/></svg></span>
  <span class="tk open cur"><svg class="tic" viewBox="0 0 32 32"><rect x="1" y="1" width="30" height="30" fill="#0b5a9c"/><path d="M9 6h6q8 0 8 9t-8 8H9zM16 14l-8 14h3.500l4.500-8 4.500 8H24z" fill="none" stroke="#fff" stroke-width="1.800"/></svg></span>
  <span class="tk open"><svg class="tic" viewBox="0 0 32 32"><circle cx="16" cy="16" r="14" fill="#0b3c8a"/><circle cx="16" cy="16" r="4" fill="#20c8e8"/><g fill="#20c8e8"><circle cx="16" cy="8" r="3"/><circle cx="23" cy="12" r="3"/><circle cx="23" cy="20" r="3"/><circle cx="16" cy="24" r="3"/><circle cx="9" cy="20" r="3"/><circle cx="9" cy="12" r="3"/></g></svg></span>
  <span class="tk hot"><svg class="tic" viewBox="0 0 32 32"><ellipse cx="12" cy="12" rx="11" ry="9.500" fill="#25c84a"/><ellipse cx="22" cy="20" rx="9" ry="8" fill="#f2f2f2"/><circle cx="9" cy="10" r="1.500" fill="#0a7a2a"/><circle cx="15" cy="10" r="1.500" fill="#0a7a2a"/><circle cx="19" cy="19" r="1" fill="#999"/><circle cx="25" cy="19" r="1" fill="#999"/></svg></span>
  <span class="tk open"><svg class="tic" viewBox="0 0 32 32"><rect x="2" y="1" width="28" height="30" rx="5" fill="#fff"/><circle cx="16" cy="11" r="5" fill="none" stroke="#4a6ae0" stroke-width="2.500"/><circle cx="11" cy="18" r="5" fill="none" stroke="#2fb0e8" stroke-width="2.500"/><circle cx="21" cy="18" r="5" fill="none" stroke="#e8506a" stroke-width="2.500"/><path d="M12 27h8" stroke="#e8506a" stroke-width="2"/></svg></span>
  <span class="tk open"><svg class="tic" viewBox="0 0 32 32"><path d="M1 5h8l3 14 3-10h3l3 10 3-14h7l-8 24h-5l-4-11-4 11H9z" fill="#e0191f"/></svg></span>
  <span class="tk hot"><svg class="tic" viewBox="0 0 32 32"><ellipse cx="16" cy="16" rx="13" ry="15" fill="#1b3fb0"/><path d="M5 10c4-8 14-10 20-4-6-2-10 0-12 4-1 3-5 1-8 0z" fill="#4b8ae8"/><path d="M16 5l4 10-9 5 6-6z" fill="#87b4f0" opacity=".7"/></svg></span>
  <span class="tk hot"><svg class="tic" viewBox="0 0 32 32"><circle cx="16" cy="16" r="15" fill="#1a1a1a"/><circle cx="16" cy="16" r="11.500" fill="none" stroke="#e8e8e8" stroke-width="1"/><path d="M12 5a6 6 0 0 1 10 5c-1 3-5 3-7 2-3-1-4-4-3-7zM7 22a6 6 0 0 1 2-11c3 0 5 3 4 6-1 3-3 5-6 5zM26 22a6 6 0 0 1-11 2c-1-3 1-6 3-7 3-1 7 1 8 5z" fill="#e8e8e8"/><circle cx="17" cy="8" r="2.500" fill="#1a1a1a"/><circle cx="9" cy="17" r="2.500" fill="#1a1a1a"/><circle cx="21" cy="22" r="2.500" fill="#1a1a1a"/></svg></span>
  <div class="tray">
    <span class="tr"><svg class="ti" viewBox="0 0 24 24"><path d="M4 16l8-8 8 8" fill="none" stroke="#222" stroke-width="1.500"/></svg></span>
    <span class="tr"><svg class="ti" viewBox="0 0 24 24"><rect x="8" y="1" width="8" height="14" rx="4" fill="#111"/><path d="M6 11v2a6 6 0 0 0 12 0v-2M12 19v3M8 22h8" fill="none" stroke="#222" stroke-width="1.300"/></svg></span>
    <span class="tr"><svg class="ti" viewBox="0 0 24 24"><path d="M12 2c-5 0-7 4-7 9-3 4-3 7-2 8l2-1c1 3 3 4 7 4s6-1 7-4l2 1c1-1 1-4-2-8 0-5-2-9-7-9z" fill="#222"/><path d="M8 13c2 1 6 1 8 0 1 3 1 8-4 8s-5-5-4-8z" fill="#fff"/><path d="M4 16h9l-1 5H5z" fill="#d43a1a"/><rect x="11" y="11" width="11" height="8" rx="1" fill="#f0b42a"/></svg></span>
    <span class="tr"><svg class="ti" viewBox="0 0 24 24"><path d="M12 2l9 3v8c0 4-4 7-9 9-5-2-9-5-9-9V5z" fill="#fff" stroke="#222" stroke-width="1.300"/><path d="M12 2v20M3 11h18" stroke="#222"/><circle cx="17" cy="17" r="6" fill="#1c9a5a"/><path d="M14 17l2 2 4-4" stroke="#fff" stroke-width="1.400" fill="none"/></svg></span>
    <span class="tr"><svg class="ti" viewBox="0 0 24 24"><rect x="5" y="7" width="16" height="10" fill="#111" stroke="#111"/><path d="M21 10h2v4h-2zM1 11h4M2 8v6" stroke="#111" fill="#111"/></svg></span>
    <span class="tr"><svg class="ti" viewBox="0 0 24 24"><path d="M3 9h4l4-4v14l-4-4H3z" fill="none" stroke="#222" stroke-width="1.200"/><path d="M14 9c1 2 1 4 0 6M17 6c2 4 2 8 0 12" fill="none" stroke="#555"/><path d="M20 4c3 5 3 11 0 16" fill="none" stroke="#aaa"/></svg></span>
    <span class="tr wide"><svg class="ti" viewBox="0 0 24 24"><path d="M2 17c3-6 6-9 12-10M6 19c2-4 4-6 8-7M10 21c1-2 2-4 5-4M4 12c3-5 6-7 11-8" fill="none" stroke="#555" stroke-width="1.200"/><circle cx="19" cy="19" r="2" fill="#222"/></svg></span>
    <span class="tr"><svg class="ti" viewBox="0 0 24 24"><path d="M18 2l3 3L8 20H4v-4zM17 10c5 0 5 6 0 5M4 20c-3-2-3-6 0-6" fill="none" stroke="#222" stroke-width="1.200"/></svg></span>
    <span class="tr ime">中</span>
    <span class="clock"><span>15:03</span><span>2023/2/27</span></span>
    <span class="notif"><svg viewBox="0 0 32 32"><path d="M4 3h20v15H10l-6 5z" fill="#111"/><path d="M8 7h12M8 11h12M8 15h8" stroke="#fff"/><circle cx="22" cy="21" r="10" fill="#c4ced6" stroke="#777"/><text x="22" y="27" class="nnum">1</text></svg></span>
  </div>
</footer>

<div class="widget"><i class="wstripes"></i></div>

<div class="searchpop">
  <div class="srow">
    <svg class="sic" viewBox="0 0 16 16"><circle cx="9" cy="6.500" r="5" fill="none" stroke="#444"/><path d="M5.500 10L1.500 15" stroke="#444"/></svg>
    <span class="sinput">*/</span><i class="caret"></i>
    <span class="sright">
      <svg class="sic" viewBox="0 0 16 16"><circle cx="8" cy="8" r="6.500" fill="#eee" stroke="#444"/><path d="M5 5l6 6M11 5l-6 6" stroke="#444"/></svg>
      <svg class="sic" viewBox="0 0 16 16"><path d="M8 1l6 3.500v7L8 15l-6-3.500v-7z" fill="#ddd" stroke="#777"/><circle cx="8" cy="8" r="2.500" fill="#fff" stroke="#777"/></svg>
      <svg class="sic" viewBox="0 0 16 16"><path d="M3 6l5 5 5-5" fill="none" stroke="#555"/></svg>
    </span>
  </div>
  <div class="srow2"><span class="sm">(-)</span><span>No match!</span><span class="dash">-------------------------------------------</span></div>
</div>
</body>
</html>
```

FILE: styles.css
```css
* { box-sizing: border-box; }
html, body { margin: 0; padding: 0; }
body {
  position: relative;
  width: 1920px;
  height: 1080px;
  overflow: hidden;
  display: flex;
  flex-direction: column;
  background: #f0f0f0;
  font-family: "Liberation Mono", monospace;
  font-size: 15px;
  color: #222;
}
i { font-style: normal; display: block; }
pre { margin: 0; font: inherit; }

/* title + menu */
.titlebar {
  height: 29px;
  flex: none;
  display: flex;
  align-items: center;
  background: #0a7bd2;
  color: #fff;
  padding-left: 2px;
}
.applogo { width: 20px; height: 24px; flex: none; }
.titletext {
  margin-left: 5px;
  padding-bottom: 2px;
  font-family: "Open Sans", "Noto Sans CJK SC", sans-serif;
  font-size: 15.500px;
  white-space: nowrap;
}
.winctl { margin-left: auto; display: flex; padding-right: 4px; }
.winctl svg { width: 58px; height: 29px; display: block; }
.menubar {
  height: 23px;
  flex: none;
  display: flex;
  align-items: center;
  gap: 16px;
  padding: 2px 0 0 7px;
  background: #fff;
  color: #222;
}

/* work area */
.work {
  flex: 1;
  min-height: 0;
  display: grid;
  grid-template-columns: 287px 305px 923px 6px 399px;
  grid-template-rows: 42px 792px 24px 120px;
}
.dbpanel { grid-column: 1; grid-row: 1 / 4; display: flex; flex-direction: column; padding-bottom: 1px; }
.dbhead {
  height: 32px;
  margin-right: 6px;
  flex: none;
  background: #d9d9d9;
  display: flex;
  align-items: center;
  justify-content: space-between;
  padding: 0 5px 0 1px;
  color: #333;
}
.dbt { padding-top: 3px; }
.rt { padding-top: 2px; }
.x { font-family: "Liberation Sans", sans-serif; font-weight: 700; font-size: 17px; color: #333; }
.tree {
  flex: 1;
  min-height: 0;
  margin: 4px 7px 0 1px;
  border: 1px solid #9a9a9a;
  background: #fff;
  display: flex;
  flex-direction: column;
  overflow: hidden;
}
.treehead { height: 31px; flex: none; display: flex; align-items: center; background: #fff; position: relative; }
.lamp { width: 16px; height: 24px; margin: 0 7px 0 8px; flex: none; }
.namecol { border-left: 1px solid #eee; padding-left: 4px; height: 31px; line-height: 32px; color: #222; }
.sortup {
  margin-left: 135px;
  margin-bottom: 20px;
  width: 0; height: 0;
  border-left: 4px solid transparent;
  border-right: 4px solid transparent;
  border-bottom: 5px solid #111;
}
.colbtn {
  margin-left: auto;
  margin-right: 1px;
  width: 24px;
  height: 28px;
  background: #ececec;
  border: 1px solid #bbb;
  display: flex;
  align-items: center;
  justify-content: center;
  position: relative;
}
.colbtn svg { width: 20px; height: 18px; }
.colbtn::after { content: ""; position: absolute; right: 1px; bottom: 1px; border-left: 5px solid transparent; border-bottom: 5px solid #111; }

.rows { flex: 1; min-height: 0; overflow: hidden; }
.row { height: 22px; display: flex; align-items: center; white-space: nowrap; overflow: hidden; background: #fff; color: #1a1a1a; }
.row.alt { background: #ededed; }
.row.hd { background: #cfcfcf; font-weight: 700; font-size: 16.700px; color: #111; }
.lbl { padding-top: 2px; }
.cbs { width: 34px; flex: none; display: flex; padding-left: 7px; }
.cb { width: 16px; height: 16px; border: 1px solid #555; background: #fff; position: relative; }
.cb.fill::after { content: ""; position: absolute; inset: 2px; background: #333; }
.cb.on::after {
  content: "";
  position: absolute;
  left: 4px; top: 1px;
  width: 6px; height: 10px;
  border: solid #444;
  border-width: 0 1.500px 1.500px 0;
  transform: rotate(40deg);
}
.chv { width: 24px; flex: none; position: relative; height: 14px; }
.chv.l1 { width: 50px; }
.chv.l2 { width: 75px; }
.chv.down::before, .chv.right::before {
  content: "";
  position: absolute;
  top: 2px;
  width: 7px; height: 7px;
  border: solid #444;
  border-width: 0 2px 2px 0;
}
.chv.down::before { left: 4px; transform: rotate(45deg); }
.chv.right::before { left: 3px; top: 3px; transform: rotate(-45deg); border-color: #999; border-width: 0 1.500px 1.500px 0; }
.chv.l1.down::before { left: 30px; }
.chv.l1.right::before { left: 28px; }
.chv.l2.right::before { left: 53px; }

.hbar { height: 21px; flex: none; display: flex; align-items: center; background: #f0f0f0; padding: 0 4px 0 6px; }
.arr { width: 9px; height: 9px; flex: none; border: solid #444; border-width: 0 1.500px 1.500px 0; }
.arr.left { transform: rotate(135deg); margin-left: 3px; }
.arr.rightarr { transform: rotate(-45deg); margin-right: 9px; }
.arr.upa { transform: rotate(-135deg); margin-top: 8px; }
.arr.dna { transform: rotate(45deg); margin-top: auto; margin-bottom: 6px; }
.track { flex: 1; height: 100%; margin: 0 7px 0 6px; }
.thumb { display: block; height: 100%; background: #c6c6c6; }
.thumb.t1 { width: 108px; }
.thumb.t2 { width: 231px; margin-left: 0; }
.corners { width: 15px; height: 15px; flex: none; }

/* tool bars */
.toolbar { display: flex; align-items: center; height: 40px; }
.toolbar.top { grid-column: 2 / 6; grid-row: 1; height: 42px; overflow: hidden; padding-bottom: 6px; }
.toolbar.top .sep { height: 30px; }
.i { width: 37px; height: 34px; flex: none; display: flex; align-items: center; justify-content: center; }
.i.act { background: #c3dcf2; box-shadow: inset 0 0 0 1px #b0cfe8; }
.actgroup { display: flex; align-items: center; height: 34px; background: #c3dcf2; box-shadow: inset 0 0 0 1px #b0cfe8; }
.ic { width: 28px; height: 28px; display: block; }
.tri { fill: #111; }
.dd {
  width: 14px; height: 6px;
  flex: none;
  position: relative;
}
.dd::before {
  content: "";
  position: absolute;
  left: 2.500px; top: 0;
  border-left: 4.500px solid transparent;
  border-right: 4.500px solid transparent;
  border-top: 6px solid #111;
}
.ch { width: 12px; height: 14px; flex: none; position: relative; }
.ch::before {
  content: "";
  position: absolute;
  left: 0; top: 3px;
  width: 8px; height: 8px;
  border: solid #333;
  border-width: 1.500px 1.500px 0 0;
  transform: rotate(45deg);
}
.sep {
  width: 3px;
  height: 40px;
  flex: none;
  background: radial-gradient(circle, #a8a8a8 0.7px, transparent 0.9px) 0 0 / 3px 3px;
}
.sep.s1 { margin-left: 1px; }
.sp { flex: none; height: 1px; }
.w1 { width: 1px; } .w2 { width: 2px; } .w3 { width: 3px; } .w4 { width: 4px; } .w5 { width: 5px; } .w6 { width: 6px; } .w8 { width: 8px; }
.w12 { width: 12px; } .w14 { width: 14px; } .w16 { width: 16px; } .w17 { width: 17px; } .w24 { width: 24px; } .w27 { width: 27px; } .w30 { width: 30px; } .w32 { width: 32px; } .w58 { width: 58px; }
.bigl { font: 700 25px "Liberation Sans", sans-serif; fill: #3f63d8; }
.ent { font: 700 13.500px "Liberation Sans", sans-serif; fill: #777; }
.pid { font: 400 14px "Liberation Mono", monospace; fill: #222; }

.bottools { grid-column: 3; grid-row: 3 / 5; padding-top: 36px; display: flex; flex-direction: column; gap: 19px; }

/* viewport */
.viewport {
  grid-column: 2 / 4;
  grid-row: 2;
  position: relative;
  overflow: hidden;
  background: linear-gradient(#04121f 0%, #0d2232 30%, #1d3243 58%, #354a5b 100%);
  color: #d4d8dc;
}
.vtop { padding: 1px 0 0 2px; line-height: 22px; }
.stats { margin-top: 124px; padding-left: 3px; line-height: 21px; }
.vdots { position: absolute; left: 3px; top: 722px; color: #aaa; font-size: 15px; }
.axes { position: absolute; left: 1073px; top: 6px; width: 130px; height: 170px; }
.axl { font: 400 36px "Liberation Mono", monospace; }
.axl.z { fill: #1d7f85; }
.axl.y { fill: #55e03a; }
.axl.xx { fill: #7a1015; }
.cyl { position: absolute; left: 593px; top: 336px; width: 220px; height: 340px; }

/* right panel */
.rpanel { grid-column: 4 / 6; grid-row: 2 / 5; padding-left: 6px; display: flex; flex-direction: column; padding-top: 1px; }
.rhead {
  height: 32px;
  flex: none;
  background: #d9d9d9;
  display: flex;
  align-items: center;
  justify-content: space-between;
  padding: 0 5px 0 2px;
  color: #333;
}
.rbody { flex: 1; border-left: 1px solid #fafafa; padding: 11px 0 0 8px; font-family: "Liberation Sans", sans-serif; }
.sec { display: grid; grid-template-columns: repeat(3, 125px); column-gap: 2px; }
.s-vol { grid-auto-rows: 30px; row-gap: 3px; }
.s-un { grid-auto-rows: 28px; row-gap: 2px; }
.s-st { grid-auto-rows: 29px; row-gap: 2.500px; }
.s-im { grid-template-rows: 29px 31px 31px; row-gap: 2.500px; margin-top: 8.500px; }
.s-oc { grid-auto-rows: 31px; row-gap: 2px; margin-top: 8px; }
.s-to { grid-auto-rows: 28px; row-gap: 2px; }
.span2 { grid-column: span 2; }
.ttl, .head { font-weight: 700; font-size: 15px; color: #111; display: flex; align-items: center; gap: 8px; padding-left: 9px; }
.ttl { padding-bottom: 2px; }
.head { height: 39px; }
.h-un { padding-top: 6px; }
.h-st { padding-top: 3px; padding-left: 10px; }
.h-to { height: 38px; padding-top: 4px; padding-left: 10px; }
.play { width: 0; height: 0; border-left: 7px solid #222; border-top: 4px solid transparent; border-bottom: 4px solid transparent; margin-top: 2px; }
.b {
  margin: 0;
  padding: 0 0 1px;
  background: #e1e1e1;
  border: 1px solid #c4c4c4;
  border-bottom-color: #a6a6a6;
  font: 14.500px "Liberation Sans", sans-serif;
  color: #222;
  position: relative;
}
.b.m { padding-right: 5px; }
.b.m::after {
  content: "";
  position: absolute;
  right: 1px; bottom: 1px;
  border-left: 6px solid transparent;
  border-bottom: 6px solid #111;
}

/* info */
.info { grid-column: 1 / 3; grid-row: 4; display: flex; padding: 5px 0 0 3px; gap: 8px; }
.infotab {
  width: 29px;
  height: 113px;
  background: #d9d9d9;
  display: flex;
  flex-direction: column;
  align-items: center;
  justify-content: space-between;
}
.vert { writing-mode: vertical-rl; transform: rotate(180deg); color: #333; margin-bottom: 2px; padding-right: 1px; }
.infobox { width: 552px; height: 106px; margin-top: 3px; border: 1px solid #777; background: #fff; display: flex; flex-direction: column; }
.inforow { flex: 1; min-height: 0; display: flex; overflow: hidden; }
.log { flex: 1; min-width: 0; overflow: hidden; line-height: 19px; padding-left: 3px; margin-top: -8px; white-space: pre; color: #1a1a1a; }
.vbar { width: 20px; flex: none; background: #f0f0f0; display: flex; flex-direction: column; align-items: center; }
.vthumb { width: 20px; height: 13px; background: #c6c6c6; margin-top: 30px; }
.hbar.h2 { height: 20px; padding-left: 2px; }
.hbar.h2 .track { margin: 0 8px 0 7px; }

/* task bar */
.taskbar {
  height: 50px;
  flex: none;
  display: flex;
  background: linear-gradient(90deg, #dbe8f0, #d5e2e9 60%, #cfdce3);
}
.tk3 { display: flex; }
.tk3 .tk { width: 60px; }
.tkgap { width: 3px; flex: none; }
.tk { width: 62px; height: 50px; flex: none; display: flex; align-items: center; justify-content: center; position: relative; }
.tic { width: 34px; height: 34px; display: block; }
.tk.open::after { content: ""; position: absolute; left: 6px; right: 5px; bottom: 0; height: 3px; background: #1479c4; }
.tk.cur { background: #eef4f8; }
.tk.cur::after { left: 0; right: 0; }
.tk.hot { background: #f1a970; }
.tk.hot + .tk.hot { border-left: 1px solid #f8dcc4; }
.tk.hot::after { content: ""; position: absolute; left: 0; right: 0; bottom: 0; height: 3px; background: #e8701a; }
.tray { margin-left: auto; display: flex; align-items: center; padding-right: 20px; font-family: "Open Sans", "Noto Sans CJK SC", sans-serif; color: #222; }
.tr { width: 40px; height: 50px; display: flex; align-items: center; justify-content: center; flex: none; }
.tr.wide { width: 42px; margin-right: 2px; }
.ti { width: 24px; height: 24px; display: block; }
.ime { font-family: "Noto Sans CJK SC", sans-serif; font-size: 18px; }
.clock { width: 80px; display: flex; flex-direction: column; align-items: center; font-size: 14.500px; line-height: 24px; flex: none; }
.notif { width: 40px; margin-left: 13px; flex: none; display: flex; justify-content: center; }
.notif svg { width: 32px; height: 32px; display: block; }
.nnum { font: 400 17px "Liberation Sans", sans-serif; fill: #222; text-anchor: middle; }

/* overlays */
.widget {
  position: absolute;
  left: 0; top: 720px;
  width: 14px; height: 73px;
  background: #3d4a55;
  border-radius: 0 4px 4px 0;
  padding: 47px 3px 0 1px;
}
.wstripes { height: 20px; background: repeating-linear-gradient(#7fcf88 0 2px, #4e8a5c 2px 3px); }
.searchpop {
  position: absolute;
  left: 1304px; top: 29px;
  width: 615px; height: 43px;
  background: #fff;
  border: 1px solid #8a8a8a;
  box-shadow: 0 1px 3px rgba(0,0,0,.4);
}
.srow { height: 21px; border-bottom: 1px solid #9a9a9a; display: flex; align-items: center; padding-left: 4px; }
.sic { width: 16px; height: 16px; display: block; flex: none; }
.sinput { margin-left: 2px; color: #222; }
.caret { width: 1px; height: 18px; background: #222; margin-left: 0; }
.sright { margin-left: auto; display: flex; gap: 0; margin-right: 0; }
.sright .sic { margin-left: 1px; }
.srow2 { height: 20px; display: flex; align-items: center; color: #777; white-space: nowrap; font-size: 15px; padding-left: 14px; }
.sm { width: 34px; flex: none; }
.dash { margin-left: 9px; }
```
